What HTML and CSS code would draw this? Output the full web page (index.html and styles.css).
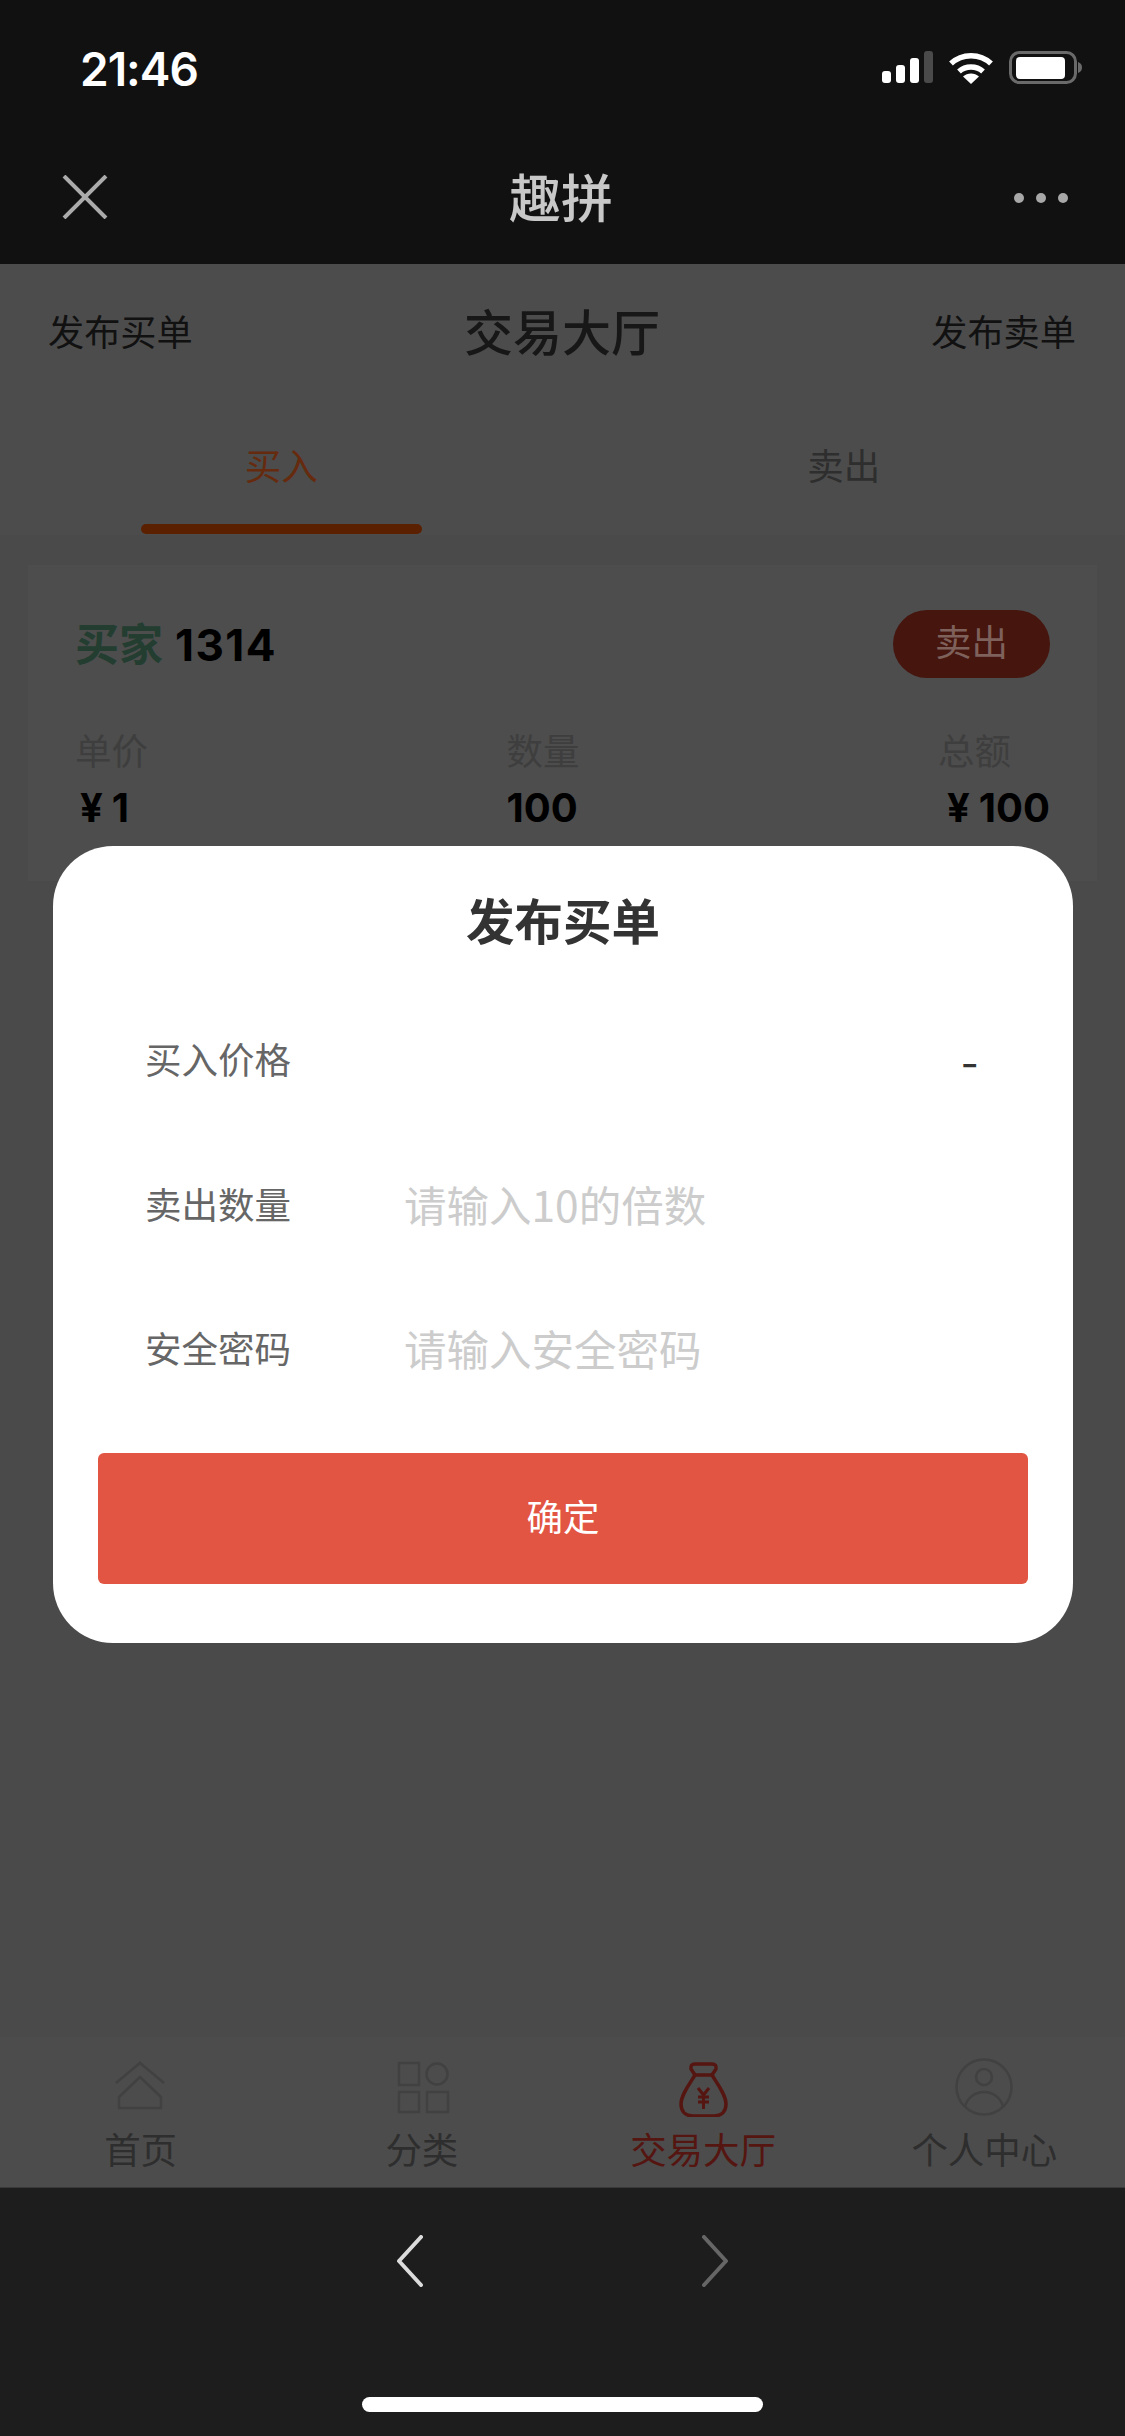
FILE: index.html
```html
<!DOCTYPE html>
<html lang="zh-CN">
<head>
<meta charset="utf-8">
<title>趣拼</title>
<link rel="stylesheet" href="styles.css">
</head>
<body>
<div class="screen">
  <header class="topbar">
    <div class="status">
      <span class="time">21:46</span>
      <div class="status-icons">
        <svg width="51" height="32" viewBox="0 0 51 32"><rect x="0" y="20" width="9" height="12" rx="3" fill="#fff"/><rect x="14" y="14" width="9" height="18" rx="3" fill="#fff"/><rect x="28" y="7" width="9" height="25" rx="3" fill="#fff"/><rect x="42" y="0" width="9" height="32" rx="3" fill="#4a4a4a"/></svg>
        <svg width="46" height="33" viewBox="0 0 46 33"><path d="M3 12.5C14 2 32 2 43 12.5" fill="none" stroke="#fff" stroke-width="5.5"/><path d="M11 20.5C17.500 14.500 28.500 14.500 35 20.500" fill="none" stroke="#fff" stroke-width="5.500"/><path d="M23 33L15 25.500C19.500 21.500 26.500 21.500 31 25.500Z" fill="#fff"/></svg>
        <svg width="73" height="33" viewBox="0 0 73 33"><rect x="1.500" y="1.500" width="65" height="30" rx="9" fill="none" stroke="#6a6a6a" stroke-width="3"/><rect x="7" y="6" width="49" height="22" rx="4" fill="#fff"/><path d="M69 11C72 12 73 14 73 16.500C73 19 72 21 69 22Z" fill="#6a6a6a"/></svg>
      </div>
    </div>
    <nav class="nav">
      <svg class="nav-close" width="46" height="44" viewBox="0 0 46 44"><path d="M2 1L44 43M44 1L2 43" stroke="#ababab" stroke-width="4" fill="none"/></svg>
      <span class="nav-title">趣拼</span>
      <div class="nav-dots"><i></i><i></i><i></i></div>
    </nav>
  </header>

  <main class="main">
    <div class="head">
      <div class="head-row">
        <span class="head-link">发布买单</span>
        <span class="head-title">交易大厅</span>
        <span class="head-link">发布卖单</span>
      </div>
      <div class="tabs">
        <div class="tab tab-on"><span class="tab-label">买入</span><i class="tab-line"></i></div>
        <div class="tab"><span class="tab-label">卖出</span></div>
      </div>
    </div>
    <section class="card">
      <div class="card-top">
        <div class="buyer"><span class="buyer-tag">买家</span> 1314</div>
        <span class="sell-btn">卖出</span>
      </div>
      <div class="stats">
        <div class="stat"><span class="stat-label">单价</span><span class="stat-value"><span class="yen">¥</span>1</span></div>
        <div class="stat"><span class="stat-label">数量</span><span class="stat-value">100</span></div>
        <div class="stat stat-end"><span class="stat-label">总额</span><span class="stat-value"><span class="yen">¥</span>100</span></div>
      </div>
    </section>
  </main>

  <footer class="tabbar">
    <div class="tabbar-item">
      <svg class="tabbar-icon" width="60" height="60" viewBox="0 0 60 60" fill="none" stroke="#414141" stroke-width="2.500"><path d="M5 26L29 6L53 26"/><path d="M8 40L29 20L50 40V51H8Z" stroke-linejoin="round"/></svg>
      <span class="tabbar-label">首页</span>
    </div>
    <div class="tabbar-item">
      <svg class="tabbar-icon" width="60" height="60" viewBox="0 0 60 60" fill="none" stroke="#414141" stroke-width="2.500"><rect x="7" y="6" width="20" height="22"/><circle cx="45" cy="17" r="10.500"/><rect x="7" y="35" width="20" height="20"/><rect x="35" y="35" width="21" height="20"/></svg>
      <span class="tabbar-label">分类</span>
    </div>
    <div class="tabbar-item tabbar-on">
      <svg class="tabbar-icon" width="60" height="60" viewBox="0 0 60 60" fill="none" stroke="#551510" stroke-width="3.500" stroke-linejoin="round"><g transform="translate(-2 0)"><path d="M24 18H41C47 28 55 38 55 47C55 55 50 59 43 59H22C15 59 10 55 10 47C10 38 18 28 24 18Z"/><path d="M24 18L20 12Q19 7 24 7H41Q46 7 45 12L41 18"/><path d="M27 31L32.500 38L38 31M27 40H38M27 45H38M32.500 38V52" stroke-width="3"/></g></svg>
      <span class="tabbar-label">交易大厅</span>
    </div>
    <div class="tabbar-item">
      <svg class="tabbar-icon" width="60" height="60" viewBox="0 0 60 60" fill="none" stroke="#414141" stroke-width="2.500"><circle cx="30" cy="30" r="27.500"/><circle cx="30" cy="20" r="8"/><path d="M11 50C13 40 22 35 30 35C38 35 47 40 49 50"/></svg>
      <span class="tabbar-label">个人中心</span>
    </div>
  </footer>

  <div class="browser">
    <div class="browser-nav">
      <svg width="28" height="52" viewBox="0 0 28 52" fill="none" stroke="#dcdcdc" stroke-width="4" stroke-linecap="round" stroke-linejoin="round"><path d="M25 2L3 26L25 50"/></svg>
      <svg width="28" height="52" viewBox="0 0 28 52" fill="none" stroke="#666" stroke-width="4" stroke-linecap="round" stroke-linejoin="round"><path d="M3 2L25 26L3 50"/></svg>
    </div>
    <div class="home-indicator"></div>
  </div>

  <div class="modal">
    <h2 class="modal-title">发布买单</h2>
    <div class="field"><span class="field-label">买入价格</span><span class="field-value">-</span></div>
    <div class="field"><span class="field-label">卖出数量</span><span class="field-hint">请输入10的倍数</span></div>
    <div class="field"><span class="field-label">安全密码</span><span class="field-hint">请输入安全密码</span></div>
    <div class="confirm">确定</div>
  </div>
</div>
</body>
</html>
```

FILE: styles.css
```css
* { box-sizing: border-box; margin: 0; padding: 0; }
html, body { width: 1125px; height: 2436px; overflow: hidden; }
body { font-family: "Noto Sans CJK SC", "Inter", sans-serif; background: #4a4a4a; }
i { display: block; }

.screen { position: relative; display: flex; flex-direction: column; width: 1125px; height: 2436px; }

.topbar { background: #111; height: 264px; }
.status { display: flex; justify-content: space-between; align-items: center; height: 94px; padding: 40px 43px 0 80px; }
.time { margin-top: 3px; font-family: "Inter", sans-serif; font-weight: 600; font-size: 46px; line-height: 54px; color: #fff; letter-spacing: -1px; }
.status-icons { display: flex; align-items: center; gap: 15px; }
.nav { position: relative; display: flex; justify-content: space-between; align-items: center; height: 170px; padding: 36px 57px 0 62px; }
.nav-title { margin-bottom: 3px; font-size: 52px; line-height: 60px; font-weight: 500; color: #c8c8c8; }
.nav-dots { display: flex; gap: 12px; margin-top: 2px; }
.nav-dots i { width: 10px; height: 10px; border-radius: 50%; background: #a8a8a8; }

.main { flex: 1; background: #4a4a4a; }
.head { background: #4c4c4c; height: 271px; }
.head-row { display: flex; justify-content: space-between; align-items: center; height: 132px; padding: 0 49px 0 48px; }
.head-link { font-size: 36.200px; line-height: 50px; color: #111; }
.head-title { font-size: 49px; line-height: 60px; font-weight: 500; color: #171717; }
.tabs { display: flex; height: 139px; }
.tab { flex: 1; display: flex; flex-direction: column; align-items: center; padding-top: 33px; }
.tab-label { font-size: 36.500px; line-height: 72px; color: #2e2e2e; }
.tab-on .tab-label { color: #662a0e; }
.tab-line { width: 281px; height: 10px; margin-top: 23px; border-radius: 5px; background: #5a2000; }

.card { height: 316px; margin: 30px 28px 0; padding: 45px 47px 0 47px; background: #4d4d4d; }
.card-top { display: flex; justify-content: space-between; align-items: center; height: 68px; }
.buyer { margin-bottom: 2px; font-size: 44px; line-height: 60px; font-weight: 700; color: #000; letter-spacing: 1.500px; font-family: "Inter", "Noto Sans CJK SC", sans-serif; }
.buyer-tag { color: #233d31; font-family: "Noto Sans CJK SC", sans-serif; font-weight: 700; letter-spacing: 0; }
.sell-btn { width: 157px; height: 68px; border-radius: 34px; background: #45150e; color: #7f615c; font-size: 36.500px; line-height: 62px; text-align: center; }
.stats { display: flex; justify-content: space-between; margin-top: 47px; }
.stat { display: flex; flex-direction: column; }
.stat-label { font-size: 36.500px; line-height: 50px; color: #3e3e3e; }
.stat-value { margin-top: 9px; font-family: "Inter", sans-serif; font-weight: 700; font-size: 40px; line-height: 48px; color: #000; }
.yen { margin: 0 9px 0 5px; }
.stat-end { width: 112px; }
.stat-end .stat-value { text-align: right; }

.tabbar { display: flex; height: 150px; padding-top: 20px; background: #4c4c4c; }
.tabbar-item { flex: 1; display: flex; flex-direction: column; align-items: center; gap: 7px; }
.tabbar-icon { display: block; }
.tabbar-label { font-size: 36.500px; line-height: 50px; color: #2e2e2e; }
.tabbar-on .tabbar-label { color: #551510; }

.browser { display: flex; flex-direction: column; align-items: center; height: 249px; padding: 47px 0 24px; background: #1d1d1d; border-top: 1px solid #3a3a3a; }
.browser-nav { display: flex; gap: 277px; }
.home-indicator { width: 401px; height: 15px; margin-top: auto; border-radius: 8px; background: #fff; }

.modal { position: absolute; left: 53px; top: 846px; width: 1020px; height: 797px; padding: 43px 45px 0; border-radius: 60px; background: #fff; }
.modal-title { margin-bottom: 41px; font-size: 48.500px; line-height: 60px; font-weight: 700; color: #333; text-align: center; }
.field { display: flex; align-items: center; height: 144.500px; padding: 0 49px 6px 47px; }
.field-label { width: 261px; font-size: 36.500px; line-height: 50px; color: #666; }
.field-value { margin-left: auto; padding-top: 10px; font-family: "Inter", sans-serif; font-size: 40px; line-height: 50px; color: #333; }
.field-hint { margin-left: -2px; font-size: 42.500px; line-height: 56px; color: #ccc; }
.confirm { height: 131px; margin-top: 29px; padding-bottom: 6px; border-radius: 6px; background: #e25542; color: #fff; font-size: 36.500px; line-height: 125px; text-align: center; }
```
